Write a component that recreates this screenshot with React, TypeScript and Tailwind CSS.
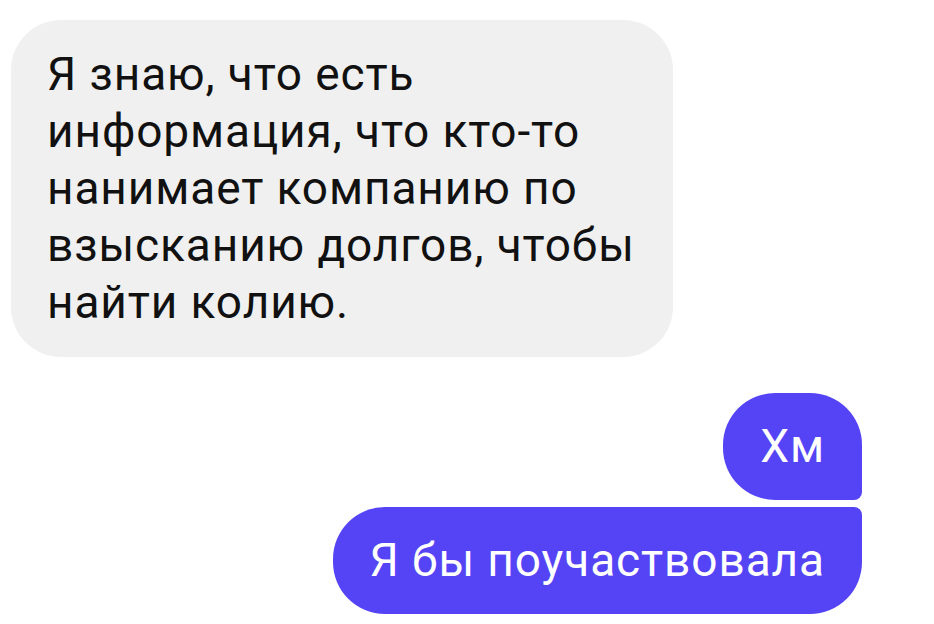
import React from "react";

const incoming = [
  "Я знаю, что есть",
  "информация, что кто-то",
  "нанимает компанию по",
  "взысканию долгов, чтобы",
  "найти колию.",
];

const App = () => {
  return (
    <div
      className="min-h-screen w-[934px] h-[624px] bg-white overflow-hidden"
      style={{ fontFamily: "Roboto, 'Noto Sans', sans-serif" }}
    >
      <div className="flex flex-col pt-[20px] pl-[11px] pr-[72px]">
        {/* incoming message */}
        <div className="self-start bg-[#f0f0f0] rounded-[50px] pl-[36px] pr-[38px] pt-[26px] pb-[26px] text-[46px] leading-[57px] tracking-[0.9px] text-[#111111]">
          {incoming.map((line) => (
            <div key={line} className="whitespace-nowrap">
              {line}
            </div>
          ))}
        </div>

        {/* outgoing messages */}
        <div className="flex flex-col items-end gap-[7px] mt-[36px]">
          <div className="bg-[#5544f6] text-white text-[46px] leading-[57px] tracking-[0.9px] px-[37px] py-[25px] rounded-[52px] rounded-br-[8px]">
            Хм
          </div>
          <div className="bg-[#5544f6] text-white text-[46px] leading-[57px] tracking-[0.9px] px-[37px] py-[25px] rounded-[52px] rounded-tr-[8px] whitespace-nowrap">
            Я бы поучаствовала
          </div>
        </div>
      </div>
    </div>
  );
};

export default App;
